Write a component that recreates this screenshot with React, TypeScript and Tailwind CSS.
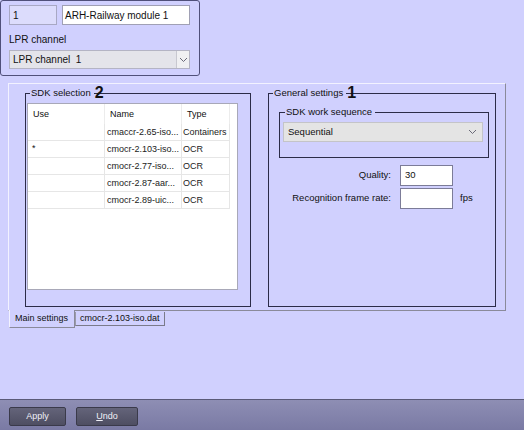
import type { ReactNode } from "react";

const BG = "bg-[#d0d0fe]";

function Chevron({ className = "" }: { className?: string }) {
  return (
    <svg width="9" height="6" viewBox="0 0 9 6" className={className}>
      <polyline points="1,1 4.5,4.5 8,1" fill="none" stroke="#6a6a78" strokeWidth="1" />
    </svg>
  );
}

function GroupBox({
  title,
  mark,
  className = "",
  titleClass = "ml-[4px]",
  children,
}: {
  title: string;
  mark?: string;
  className?: string;
  titleClass?: string;
  children: ReactNode;
}) {
  return (
    <div className={`flex flex-col border border-[#2c2c48] ${className}`}>
      <div className={`-mt-[8px] flex h-[14px] items-center self-start ${titleClass}`}>
        <span className={`${BG} pl-[1px] pr-[3px] leading-[14px]`}>{title}</span>
        {mark && (
          <span className="ml-[1px] text-[16px] font-bold leading-[14px] text-[#111]">{mark}</span>
        )}
      </div>
      {children}
    </div>
  );
}

const rows = [
  { use: "", name: "cmaccr-2.65-iso...", type: "Containers" },
  { use: "*", name: "cmocr-2.103-iso...", type: "OCR" },
  { use: "", name: "cmocr-2.77-iso...", type: "OCR" },
  { use: "", name: "cmocr-2.87-aar...", type: "OCR" },
  { use: "", name: "cmocr-2.89-uic...", type: "OCR" },
];

function SdkList() {
  return (
    <div className="ml-[1px] mt-[3px] h-[187px] w-[211px] border border-[#a8a8b8] bg-white text-[9px]">
      <div className="flex h-[20px] items-center">
        <div className="h-full w-[77px] border-r border-[#ececec] pl-[5px] leading-[20px]">Use</div>
        <div className="h-full w-[77px] border-r border-[#ececec] pl-[5px] leading-[20px]">Name</div>
        <div className="h-full w-[48px] border-r border-[#ececec] pl-[5px] leading-[20px]">Type</div>
      </div>
      {rows.map((r) => (
        <div key={r.name} className="flex h-[17px]">
          <div className="h-full w-[77px] border-b border-r border-[#e6e6e6] pl-[4px] leading-[14px]">
            {r.use}
          </div>
          <div className="h-full w-[77px] overflow-hidden whitespace-nowrap border-b border-r border-[#e6e6e6] pl-[2px] leading-[16px] text-[#222]">
            {r.name}
          </div>
          <div className="h-full w-[48px] overflow-hidden whitespace-nowrap border-b border-r border-[#e6e6e6] pl-[1px] leading-[16px] text-[#222]">
            {r.type}
          </div>
        </div>
      ))}
    </div>
  );
}

function Field({ label, value, unit }: { label: string; value: string; unit?: string }) {
  return (
    <div className="flex items-center">
      <div className="w-[122px] text-right">{label}</div>
      <div className="ml-[9px] flex h-[21px] w-[53px] items-center border border-[#7c7c98] bg-white pl-[4px]">
        {value}
      </div>
      {unit && <div className="ml-[7px]">{unit}</div>}
    </div>
  );
}

export default function App() {
  return (
    <div
      className={`flex h-[430px] w-[524px] flex-col ${BG} font-['Liberation_Sans',Arial,sans-serif] text-[9.5px] text-[#111]`}
    >
      {/* channel header */}
      <div className="h-[76px] w-[200px] rounded-[3px] border border-[#50507a] pl-[8px] pt-[4px]">
        <div className="flex gap-[5px]">
          <div className="flex h-[20px] w-[48px] items-center border border-[#a8a8c4] bg-[#dcdcfc] pl-[3px] text-[10px]">
            1
          </div>
          <div className="flex h-[20px] w-[128px] items-center border border-[#a0a0b4] bg-white pl-[2px] text-[10px]">
            ARH-Railway module 1
          </div>
        </div>
        <div className="mt-[9px] text-[10px] leading-[12px]">LPR channel</div>
        <div className="mt-[4px] flex h-[19px] w-[181px] items-center border border-[#b4b4c4] bg-[#e4e4ea] pl-[3px] text-[10px]">
          <span className="flex-1">LPR channel&nbsp; 1</span>
          <div className="flex h-full w-[13px] items-center justify-center border-l border-[#c8c8d0] bg-[#f0f0f2]">
            <Chevron />
          </div>
        </div>
      </div>

      {/* tab page */}
      <div className="ml-[8px] mt-[7px] flex h-[228px] w-[498px] border-b border-l border-r border-t border-b-[#8a8a9a] border-l-[#f2f2ff] border-r-[#8a8a9a] border-t-[#f2f2ff] pl-[16px] pt-[9px]">
        <GroupBox title="SDK selection" mark="2" className="h-[214px] w-[226px]">
          <SdkList />
        </GroupBox>
        <GroupBox title="General settings" mark="1" className="ml-[17px] h-[214px] w-[228px]">
          <GroupBox
            title="SDK work sequence"
            titleClass="ml-[5px]"
            className="ml-[10px] mt-[12px] h-[46px] w-[210px]"
          >
            <div className="ml-[3px] mt-[3px] flex h-[20px] w-[200px] items-center border border-[#c4c4c8] bg-[#e4e4e4] pl-[4px]">
              <span className="flex-1">Sequential</span>
              <Chevron className="mr-[5px]" />
            </div>
          </GroupBox>
          <div className="mt-[7px] flex flex-col gap-[2px]">
            <Field label="Quality:" value="30" />
            <Field label="Recognition frame rate:" value="" unit="fps" />
          </div>
        </GroupBox>
      </div>

      {/* tabs */}
      <div className="-mt-[1px] ml-[9px] flex items-start text-[9px]">
        <div
          className={`relative z-10 flex h-[18px] w-[66px] items-center border-b border-l border-r border-b-[#8a8a9a] border-l-[#f2f2ff] border-r-[#8a8a9a] ${BG} pl-[5px]`}
        >
          Main settings
        </div>
        <div className="mt-[2px] flex h-[14px] w-[90px] items-center border-b border-l border-r border-b-[#7a7a8a] border-l-[#9a9aaa] border-r-[#7a7a8a] pl-[4px]">
          cmocr-2.103-iso.dat
        </div>
      </div>

      <div className="flex-1" />

      {/* bottom bar */}
      <div className="flex h-[31px] items-start border-t border-[#5a5a78] bg-gradient-to-b from-[#8e8eb4] to-[#7a7aa4] pl-[9px] pt-[7px]">
        <button className="flex h-[19px] w-[57px] items-center justify-center rounded-[2px] border border-[#3a3a4a] bg-gradient-to-b from-[#64647a] to-[#4e4e62] text-[9px] text-[#f0f0f8]">
          Apply
        </button>
        <button className="ml-[10px] flex h-[19px] w-[62px] items-center justify-center rounded-[2px] border border-[#3a3a4a] bg-gradient-to-b from-[#64647a] to-[#4e4e62] text-[9px] text-[#f0f0f8]">
          <span className="underline underline-offset-1">U</span>ndo
        </button>
      </div>
    </div>
  );
}
